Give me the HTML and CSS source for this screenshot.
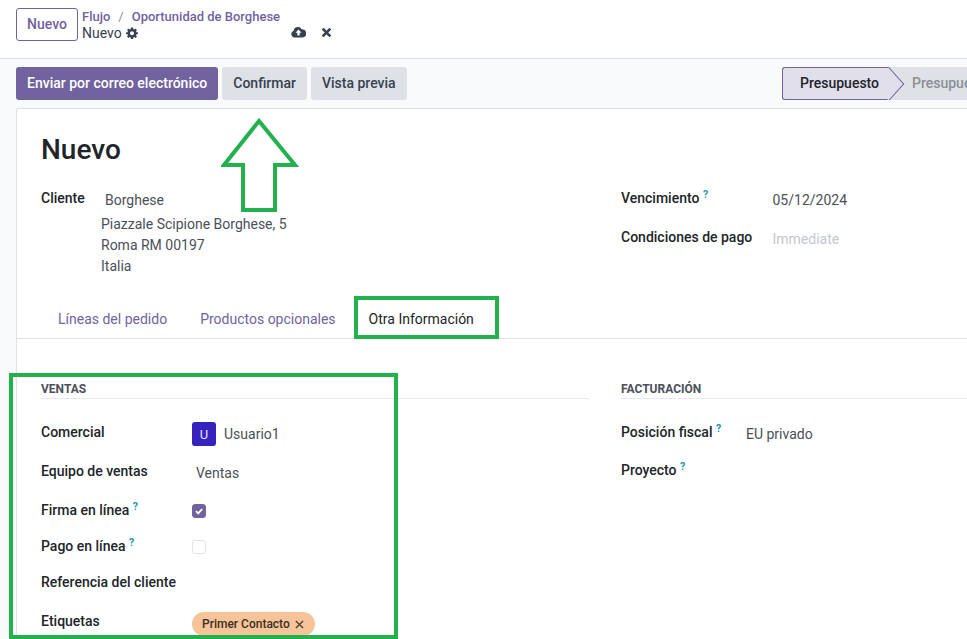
FILE: index.html
```html
<!DOCTYPE html>
<html lang="es">
<head>
    <meta charset="UTF-8">
    <meta name="viewport" content="width=device-width, initial-scale=1.0">
    <title>Nuevo - Oportunidad de Borghese</title>
    <link rel="stylesheet" href="styles.css">
</head>
<body>
    <header class="topbar">
        <button class="new-button">Nuevo</button>
        <div class="crumbs">
            <div class="crumb-path"><a>Flujo</a><span class="crumb-sep">/</span><a>Oportunidad de Borghese</a></div>
            <div class="crumb-current">
                <span>Nuevo</span>
                <svg class="gear" viewBox="0 0 24 24"><path fill-rule="evenodd" d="M10 1h4l.6 3.1 1.9.8L19.100 3.100 21.900 5.900 20.100 8.500l.8 1.900L24 11v3l-3.100.6-.8 1.900 1.800 2.600-2.800 2.800-2.600-1.800-1.900.8L14 24h-4l-.6-3.100-1.900-.8-2.600 1.800-2.800-2.800 1.800-2.600-.8-1.900L0 14v-3l3.100-.6.8-1.900L2.100 5.900 4.900 3.100 7.500 4.900l1.900-.8zM12 8.500a4 4 0 1 0 0 8 4 4 0 0 0 0-8z"/></svg>
            </div>
        </div>
        <div class="save-icons">
            <svg class="cloud" viewBox="0 0 16 12"><path fill-rule="evenodd" d="M4 11.800a3.700 3.700 0 0 1-1.200-7.200A4.600 4.600 0 0 1 11.500 3.200 4.300 4.300 0 0 1 12.300 11.800zM8 3.200 4.800 6.800h2v3h2.400v-3h2z"/></svg>
            <svg class="discard" viewBox="0 0 10 10"><path d="M1.500 1.500l7 7M8.500 1.500l-7 7"/></svg>
        </div>
    </header>

    <div class="control-bar">
        <div class="actions">
            <button class="btn btn-primary">Enviar por correo electrónico</button>
            <button class="btn">Confirmar</button>
            <button class="btn">Vista previa</button>
        </div>
        <div class="statusbar">
            <div class="stage stage-current">Presupuesto</div>
            <div class="stage-next">Presupuesto enviado</div>
        </div>
    </div>

    <main class="sheet">
        <h1 class="title">Nuevo</h1>

        <div class="columns head-columns">
            <div class="client-row">
                <label class="field-label">Cliente</label>
                <div class="client-value">
                    <div class="client-name">Borghese</div>
                    <div>Piazzale Scipione Borghese, 5</div>
                    <div>Roma RM 00197</div>
                    <div>Italia</div>
                </div>
            </div>
            <div class="field-list terms">
                <div class="field">
                    <label class="field-label">Vencimiento <sup>?</sup></label>
                    <div class="field-value">05/12/2024</div>
                </div>
                <div class="field">
                    <label class="field-label">Condiciones de pago</label>
                    <div class="field-value placeholder">Immediate</div>
                </div>
            </div>
        </div>

        <nav class="tabs">
            <a class="tab">Líneas del pedido</a>
            <a class="tab">Productos opcionales</a>
            <a class="tab tab-active">Otra Información</a>
        </nav>

        <div class="columns tab-columns">
            <section>
                <h2 class="group-title">Ventas</h2>
                <div class="field-list sales">
                    <div class="field">
                        <label class="field-label">Comercial</label>
                        <div class="field-value user"><span class="avatar">U</span>Usuario1</div>
                    </div>
                    <div class="field">
                        <label class="field-label">Equipo de ventas</label>
                        <div class="field-value team">Ventas</div>
                    </div>
                    <div class="field field-short">
                        <label class="field-label">Firma en línea <sup>?</sup></label>
                        <div class="field-value">
                            <span class="check check-on"><svg viewBox="0 0 14 14"><path d="M4 7.200l2.200 2.200L10.200 5"/></svg></span>
                        </div>
                    </div>
                    <div class="field field-short">
                        <label class="field-label">Pago en línea <sup>?</sup></label>
                        <div class="field-value"><span class="check"></span></div>
                    </div>
                    <div class="field">
                        <label class="field-label">Referencia del cliente</label>
                        <div class="field-value"></div>
                    </div>
                    <div class="field">
                        <label class="field-label">Etiquetas</label>
                        <div class="field-value tag-value">
                            <span class="tag">Primer Contacto <svg viewBox="0 0 10 10"><path d="M1 1l8 8M9 1l-8 8"/></svg></span>
                        </div>
                    </div>
                </div>
            </section>
            <section>
                <h2 class="group-title">Facturación</h2>
                <div class="field-list billing">
                    <div class="field">
                        <label class="field-label">Posición fiscal <sup>?</sup></label>
                        <div class="field-value">EU privado</div>
                    </div>
                    <div class="field">
                        <label class="field-label">Proyecto <sup>?</sup></label>
                        <div class="field-value"></div>
                    </div>
                </div>
            </section>
        </div>
    </main>

    <!-- marcas verdes sobre la captura -->
    <svg class="mark-arrow" viewBox="0 0 78 96"><path d="M38 3 3 47H22V92H54V47H74Z"/></svg>
    <div class="mark-box mark-tab"></div>
    <div class="mark-box mark-sales"></div>
</body>
</html>
```

FILE: styles.css
```css
* {
    box-sizing: border-box;
}
html, body {
    height: 100%;
}
body {
    margin: 0;
    position: relative;
    overflow: hidden;
    display: flex;
    flex-direction: column;
    font-family: Roboto, "Liberation Sans", sans-serif;
    font-size: 14px;
    color: #4b5058;
    background-color: #f9fafb;
}
button {
    font-family: inherit;
    font-size: 14px;
    font-weight: 500;
    cursor: pointer;
}

/* top bar */
.topbar {
    display: flex;
    flex-shrink: 0;
    height: 59px;
    padding: 8px 0 0 16px;
    background-color: #fff;
    border-bottom: 1px solid #dee2e6;
}
.new-button {
    width: 62px;
    height: 33px;
    padding: 0 0 1px;
    color: #71639e;
    background-color: #fff;
    border: 1px solid #71639e;
    border-radius: 3px;
}
.crumbs {
    margin-left: 4px;
    width: 198px;
    white-space: nowrap;
}
.crumb-path {
    display: flex;
    height: 17px;
    font-size: 13px;
    font-weight: 500;
    line-height: 18px;
    color: #71639e;
}
.crumb-sep {
    margin: 0 8px;
    font-weight: 400;
    color: #8f8f9e;
}
.crumb-current {
    display: flex;
    align-items: center;
    gap: 4px;
    height: 16px;
    font-size: 14px;
    color: #374151;
}
.gear {
    width: 12px;
    height: 12px;
    fill: #374151;
}
.save-icons {
    display: flex;
    align-items: center;
    gap: 14px;
    height: 30px;
    margin-left: 11px;
    margin-top: 9px;
}
.cloud {
    width: 15px;
    height: 12px;
    fill: #374151;
}
.discard {
    width: 11px;
    height: 11px;
    margin-left: 1px;
    fill: none;
    stroke: #374151;
    stroke-width: 2.4;
}

/* buttons and status */
.control-bar {
    display: flex;
    flex-shrink: 0;
    justify-content: space-between;
    align-items: flex-start;
    height: 49px;
    padding: 8px 0 0 16px;
}
.actions {
    display: flex;
    gap: 4px;
}
.btn {
    height: 33px;
    padding: 0 11px 1px;
    color: #374151;
    background-color: #dee2e6;
    border: none;
    border-radius: 3px;
}
.btn-primary {
    color: #fff;
    background-color: #71639e;
}
.statusbar {
    display: flex;
    width: 185px;
    height: 33px;
    flex-shrink: 0;
    overflow: hidden;
    font-weight: 500;
}
.stage {
    position: relative;
    z-index: 1;
    flex-shrink: 0;
    width: 107px;
    height: 33px;
    padding-left: 17px;
    line-height: 31px;
    white-space: nowrap;
    color: #212529;
    background-color: #e2dfec;
    border: 1px solid #71639e;
    border-right: none;
    border-radius: 3px 0 0 3px;
}
/* pico de la etapa */
.stage-current::after {
    content: "";
    position: absolute;
    z-index: -1;
    top: 4px;
    right: -11.500px;
    width: 23px;
    height: 23px;
    background-color: #e2dfec;
    border-top: 1px solid #71639e;
    border-right: 1px solid #71639e;
    transform: scaleX(0.9) rotate(45deg);
}
.stage-next {
    flex: 1;
    padding-left: 23px;
    line-height: 33px;
    white-space: nowrap;
    color: #8b8f96;
    background-color: #dee2e6;
}

/* sheet */
.sheet {
    flex: 1 0 auto;
    margin-left: 16px;
    background-color: #fff;
    border-top: 1px solid #dee2e6;
    border-left: 1px solid #dee2e6;
    border-top-left-radius: 3px;
}
.title {
    height: 42px;
    margin: 20px 0 0 24px;
    font-size: 28px;
    font-weight: 500;
    line-height: 42px;
    color: #212529;
}
.columns {
    display: grid;
    grid-template-columns: 548px 1fr;
    column-gap: 32px;
    padding-left: 24px;
}
.head-columns {
    height: 128px;
    padding-top: 18px;
}
.field-label {
    font-weight: 500;
    line-height: 21px;
    color: #212529;
}
sup {
    font-size: 10.500px;
    line-height: 0;
    font-weight: 700;
    color: #1b94b4;
    vertical-align: 5px;
}
.client-row {
    display: flex;
    line-height: 21px;
}
.client-row .field-label {
    width: 60px;
    margin-top: -1px;
}
.client-name {
    height: 25px;
    margin-left: 4px;
    line-height: 22px;
}
.field-list {
    display: flex;
    flex-direction: column;
}
.field {
    display: grid;
    line-height: 21px;
}
.field-value {
    margin-top: 2px;
}
.terms {
    margin-top: -1px;
}
.terms .field {
    grid-template-columns: 151.500px 1fr;
    height: 39px;
}
.placeholder {
    color: #c3c7ce;
}

/* tabs */
.tabs {
    display: flex;
    height: 40px;
    padding-left: 24.500px;
    border-bottom: 1px solid #dee2e6;
}
.tab {
    padding: 0 16.500px;
    line-height: 40px;
    color: #71639e;
}
.tab-active {
    color: #212529;
}
.tab-columns {
    padding-top: 41px;
}
.group-title {
    height: 19px;
    margin: 0 0 23px;
    font-size: 12px;
    font-weight: 700;
    line-height: 19px;
    text-transform: uppercase;
    color: #4b5058;
    border-bottom: 1px solid #e7e9ed;
}
.sales .field {
    grid-template-columns: 151px 1fr;
    height: 39px;
}
.sales .field-short {
    height: 36px;
}
.billing .field {
    grid-template-columns: 125px 1fr;
    height: 38px;
}
.user {
    display: flex;
    align-items: center;
    gap: 8px;
    height: 24px;
    margin-top: 0;
}
.avatar {
    display: flex;
    align-items: center;
    justify-content: center;
    width: 24px;
    height: 24px;
    font-size: 13px;
    color: #e6e4f5;
    background-color: #3622bd;
    border-radius: 3px;
}
.team {
    margin-left: 4px;
}
.check {
    display: block;
    width: 14px;
    height: 14px;
    margin-top: 2px;
    background-color: #fff;
    border: 1px solid #e1e4e8;
    border-radius: 3px;
}
.check svg {
    display: block;
    width: 14px;
    height: 14px;
    margin: -1px;
    fill: none;
    stroke: #fff;
    stroke-width: 1.800;
}
.check-on {
    background-color: #71639e;
    border-color: #71639e;
}
.tag-value {
    margin-top: 1px;
}
.tag {
    display: inline-flex;
    align-items: center;
    gap: 5px;
    height: 24px;
    padding: 0 11px 0 10px;
    font-size: 12px;
    font-weight: 500;
    color: #3a3026;
    background-color: #f6c498;
    border-radius: 12px;
}
.tag svg {
    width: 9px;
    height: 9px;
    fill: none;
    stroke: #4a4036;
    stroke-width: 1.500;
}

/* green marks */
.mark-arrow {
    position: absolute;
    left: 221px;
    top: 118px;
    width: 78px;
    height: 96px;
    fill: none;
    stroke: #22b14c;
    stroke-width: 4;
}
.mark-box {
    position: absolute;
    border: 4px solid #22b14c;
}
.mark-tab {
    left: 354px;
    top: 296px;
    width: 145px;
    height: 43px;
}
.mark-sales {
    left: 9px;
    top: 373px;
    width: 389px;
    height: 266px;
}
```
